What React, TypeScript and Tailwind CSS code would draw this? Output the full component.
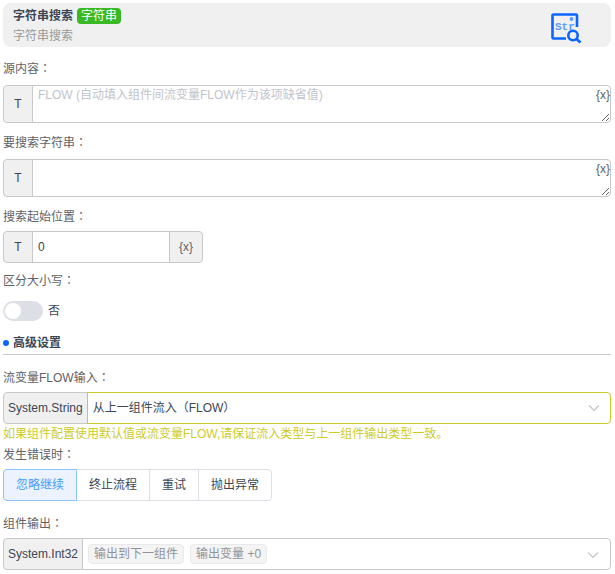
import { useState } from "react";
import type { ReactNode } from "react";

const errorActions = ["忽略继续", "终止流程", "重试", "抛出异常"];
const outputs = ["输出到下一组件", "输出变量 +0"];

function Label({ id, text }: { id: string; text: string }) {
    return (
        <label htmlFor={id} className="block h-[30px] leading-[30px] text-[#606266]">
            {text}
            <span className="font-['Noto_Sans_CJK_TC',sans-serif]">：</span>
        </label>
    );
}

function Prefix({ children }: { children: ReactNode }) {
    return (
        <span className="flex shrink-0 items-center justify-center min-w-[30px] rounded-l border border-[#c8c8c8] bg-[#f0f0f0] px-1 text-[#3c4655]">
            {children}
        </span>
    );
}

function Chevron() {
    return (
        <svg
            viewBox="0 0 12 8"
            className="pointer-events-none absolute right-[11px] top-3 h-2 w-3 fill-none stroke-[#c0c4cc]"
            strokeWidth="1.2"
        >
            <path d="M1 1.5 6 6.5 11 1.5" />
        </svg>
    );
}

function TextField({ id, label, placeholder }: { id: string; label: string; placeholder?: string }) {
    return (
        <div className="mb-0.5">
            <Label id={id} text={label} />
            <div className="py-0.5">
                <div className="relative flex">
                    <Prefix>T</Prefix>
                    <textarea
                        id={id}
                        placeholder={placeholder}
                        className="-ml-px block h-[38px] min-w-0 grow resize-y rounded-r border border-[#c8c8c8] bg-white px-[5px] py-0 leading-[18px] outline-none placeholder:text-[#c0c4cc]"
                    />
                    <button type="button" aria-label="插入变量" className="absolute right-px top-0.5 leading-4 text-[#606266]">
                        {"{x}"}
                    </button>
                </div>
            </div>
        </div>
    );
}

function SearchLogo() {
    return (
        <svg viewBox="0 0 32 32" className="mb-0.5 h-8 w-8 shrink-0 self-end" fill="none" stroke="#0a66ff">
            <path d="M15 25.5H2.5a1 1 0 0 1-1-1V2.5a1 1 0 0 1 1-1H25a1 1 0 0 1 1 1V14" strokeWidth="2.6" />
            <text x="4" y="16.5" fontSize="11" fontWeight="700" fontFamily="Liberation Mono" fill="#5b9bff" stroke="none">
                Str
            </text>
            <circle cx="20.5" cy="6" r="1.9" fill="#5b9bff" stroke="none" />
            <circle cx="22" cy="22.5" r="4.7" fill="#f0f0f0" strokeWidth="2.6" />
            <path d="m25.5 26 4 3.5" strokeWidth="2.8" />
        </svg>
    );
}

export default function App() {
    const [start, setStart] = useState("0");
    const [matchCase, setMatchCase] = useState(false);
    const [action, setAction] = useState(errorActions[0]);

    return (
        <main className="bg-white pl-[3px] pr-1 pt-[3px] pb-1 text-[12px] text-[#3c4655] font-['Liberation_Sans','Noto_Sans_CJK_SC',sans-serif]">
            <header className="mb-1.5 flex h-11 items-center justify-between rounded-lg bg-[#f0f0f0] pl-2.5 pr-7">
                <div className="pt-0.5">
                    <div className="flex h-5 items-center gap-1">
                        <h1 className="font-bold">字符串搜索</h1>
                        <span className="rounded bg-[#39b924] px-1 leading-4 text-white">字符串</span>
                    </div>
                    <p className="leading-5 text-[#999]">字符串搜索</p>
                </div>
                <SearchLogo />
            </header>

            <TextField id="source" label="源内容" placeholder="FLOW (自动填入组件间流变量FLOW作为该项缺省值)" />
            <TextField id="keyword" label="要搜索字符串" />

            <div className="mb-0.5">
                <Label id="start" text="搜索起始位置" />
                <div className="flex h-8 w-[200px]">
                    <Prefix>T</Prefix>
                    <input
                        id="start"
                        value={start}
                        onChange={(e) => setStart(e.target.value)}
                        className="-ml-px min-w-0 grow border border-[#c8c8c8] px-[5px] outline-none"
                    />
                    <button
                        type="button"
                        aria-label="插入变量"
                        className="-ml-px w-[34px] shrink-0 rounded-r border border-[#c8c8c8] bg-[#f0f0f0] text-[#606266]"
                    >
                        {"{x}"}
                    </button>
                </div>
            </div>

            <div className="mb-0.5">
                <Label id="case" text="区分大小写" />
                <div className="flex h-8 items-center gap-[5px]">
                    <span className="relative flex">
                        <input
                            id="case"
                            type="checkbox"
                            role="switch"
                            checked={matchCase}
                            onChange={(e) => setMatchCase(e.target.checked)}
                            className="peer h-5 w-10 appearance-none rounded-full bg-[#dcdfe6] checked:bg-[#409eff]"
                        />
                        <span className="pointer-events-none absolute left-0.5 top-0.5 size-4 rounded-full bg-white peer-checked:left-[22px]" />
                    </span>
                    <span>{matchCase ? "是" : "否"}</span>
                </div>
            </div>

            <h2 className="mb-[7px] flex h-[26px] items-center gap-1 border-b border-[#c8c8c8] pt-0.5 font-bold">
                <span className="size-1.5 rounded-full bg-[#0a66ff]" />
                高级设置
            </h2>

            <div>
                <Label id="flow" text="流变量FLOW输入" />
                <div className="flex h-8">
                    <Prefix>System.String</Prefix>
                    <div className="relative -ml-px grow">
                        <select
                            id="flow"
                            className="h-8 w-full appearance-none rounded-r border border-[#cccc29] bg-white pl-[5px] pr-8 outline-none"
                        >
                            <option>从上一组件流入（FLOW）</option>
                        </select>
                        <Chevron />
                    </div>
                </div>
                <p className="h-[15px] leading-5 text-[#cccc29]">
                    如果组件配置使用默认值或流变量FLOW,请保证流入类型与上一组件输出类型一致。
                </p>
            </div>

            <fieldset className="mb-[7px]">
                <legend className="h-[30px] leading-[30px] text-[#606266]">
                    发生错误时<span className="font-['Noto_Sans_CJK_TC',sans-serif]">：</span>
                </legend>
                <div className="flex h-8">
                    {errorActions.map((item) => (
                        <button
                            key={item}
                            type="button"
                            aria-pressed={action === item}
                            onClick={() => setAction(item)}
                            className="-ml-px border border-[#dcdfe6] px-3 first:ml-0 first:rounded-l last:rounded-r aria-pressed:z-10 aria-pressed:border-[#8cc5ff] aria-pressed:bg-[#ecf3ff] aria-pressed:text-[#409eff]"
                        >
                            {item}
                        </button>
                    ))}
                </div>
            </fieldset>

            <div>
                <Label id="output" text="组件输出" />
                <div className="flex h-8">
                    <Prefix>System.Int32</Prefix>
                    <button
                        id="output"
                        type="button"
                        aria-haspopup="listbox"
                        className="relative -ml-px flex grow items-center gap-1.5 rounded-r border border-[#c8c8c8] pl-[5px]"
                    >
                        {outputs.map((item) => (
                            <span key={item} className="h-5 rounded border border-[#e9e9eb] bg-[#f4f4f5] px-[5px] leading-[18px] text-[#909399]">
                                {item}
                            </span>
                        ))}
                        <Chevron />
                    </button>
                </div>
            </div>
        </main>
    );
}
